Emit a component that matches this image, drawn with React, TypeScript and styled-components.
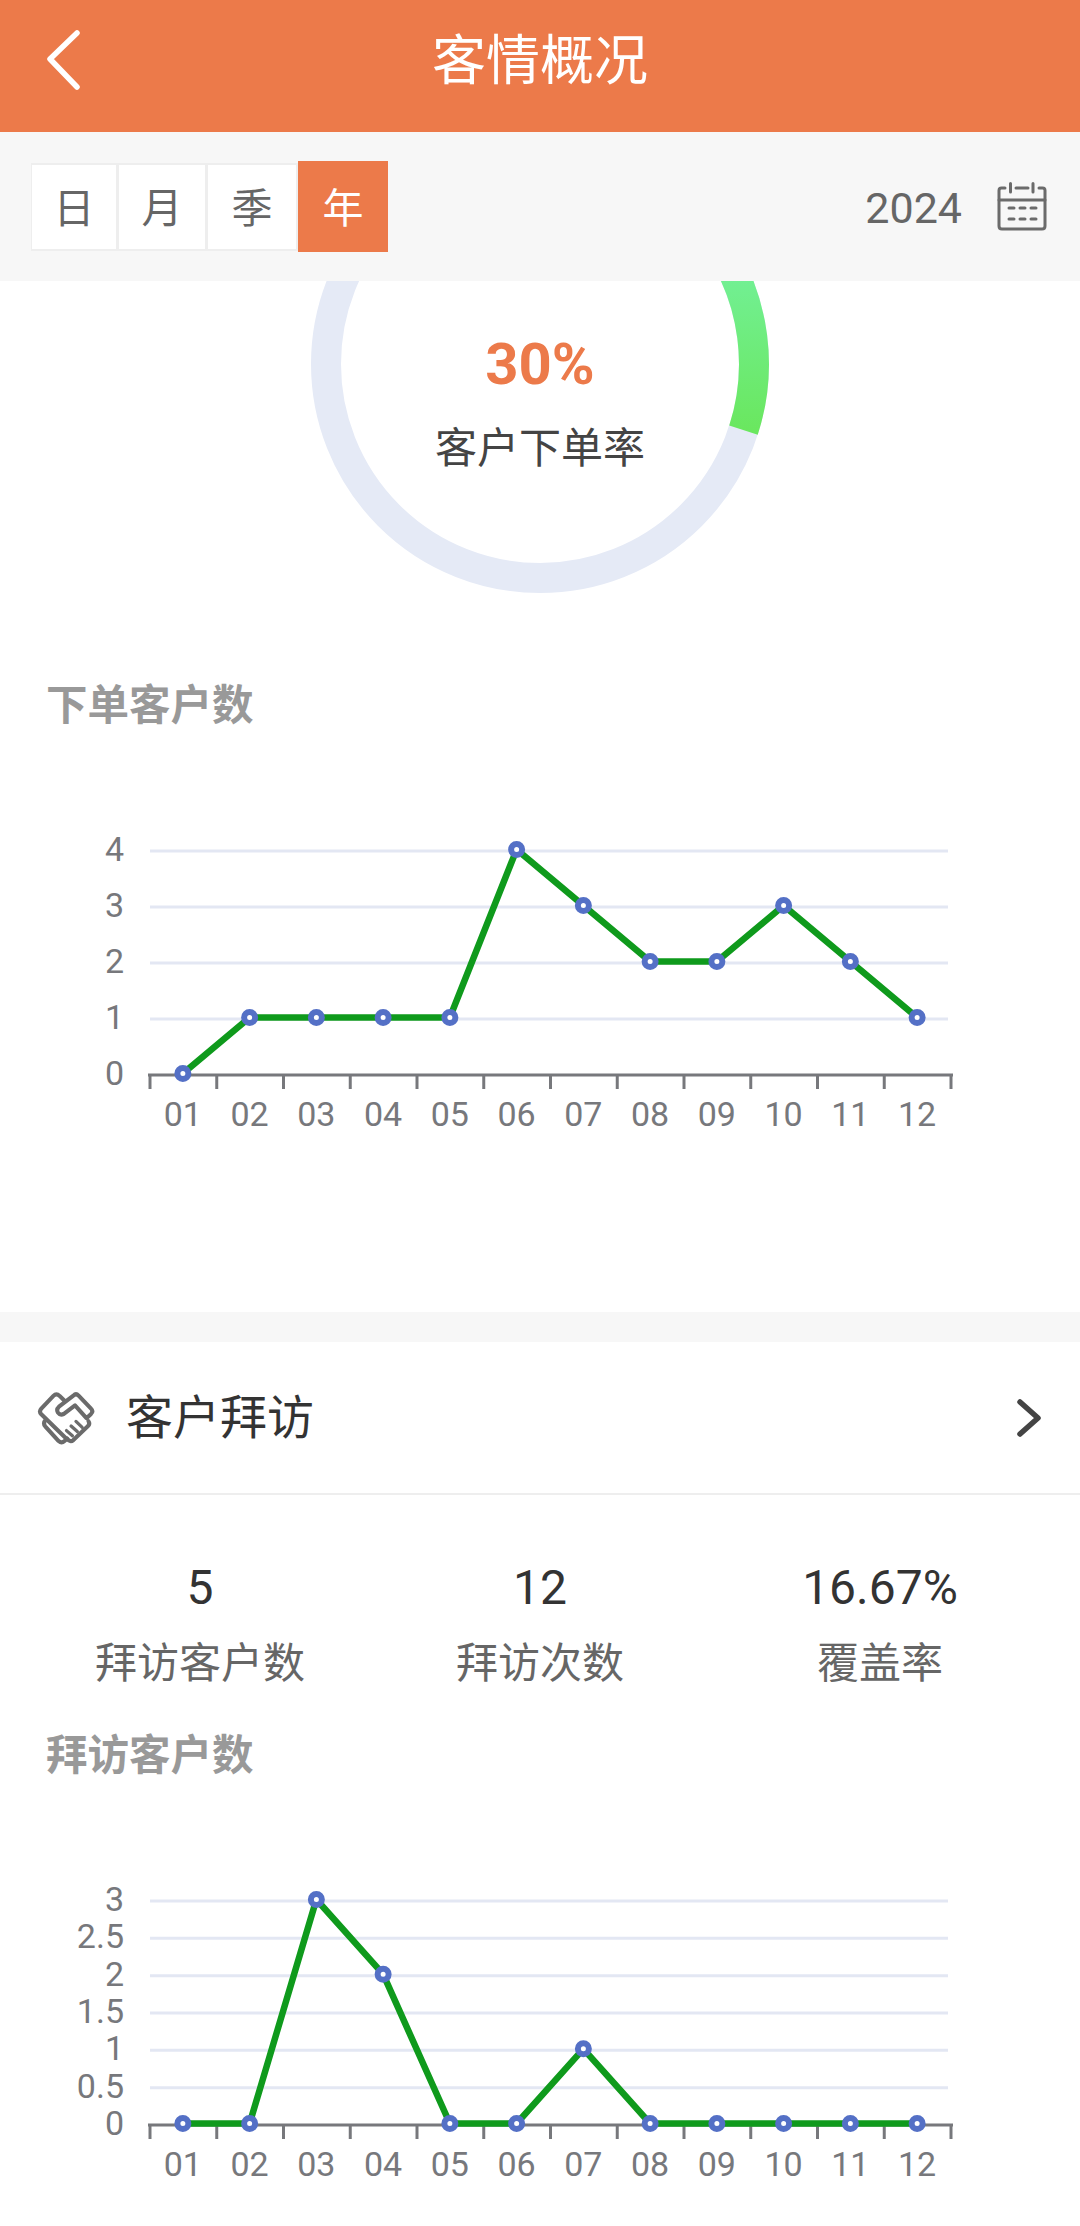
import styled, { createGlobalStyle } from 'styled-components'

const ORANGE = '#ec7a4a'
const GREY_ICON = '#6b6b6b'

const GlobalStyle = createGlobalStyle`
	html,
	body {
		margin: 0;
		padding: 0;
		background: #fff;
		font-family: Roboto, 'Noto Sans CJK SC', sans-serif;
	}
	* {
		box-sizing: border-box;
	}
`

const MONTHS = ['01', '02', '03', '04', '05', '06', '07', '08', '09', '10', '11', '12']
const ORDERS = [0, 1, 1, 1, 1, 4, 3, 2, 2, 3, 2, 1]
const VISITS = [0, 0, 3, 2, 0, 0, 1, 0, 0, 0, 0, 0]

const LineChart = ({
	data,
	ticks,
	height,
}: {
	data: number[]
	ticks: string[]
	height: number
}) => {
	const left = 150
	const right = 951
	const top = 115
	const bottom = 339
	const band = (right - left) / 12
	const max = Number(ticks[ticks.length - 1])
	const xAt = (i: number) => left + band * (i + 0.5) - 0.5
	const yAt = (v: number) => bottom - 1.5 - (v / max) * (bottom - top)
	const points = data.map((v, i) => `${xAt(i)},${yAt(v)}`).join(' ')

	return (
		<ChartSvg viewBox={`0 0 1080 ${height}`} height={height}>
			{ticks.map((t) => {
				const y = bottom - (Number(t) / max) * (bottom - top)
				return (
					<g key={t}>
						{Number(t) > 0 && <line x1={left} x2={right - 3} y1={y} y2={y} stroke="#e3e7f3" strokeWidth={3} />}
						<AxisText x={124} y={y - 2 + 12} textAnchor="end">
							{t}
						</AxisText>
					</g>
				)
			})}
			<line x1={left - 2} x2={right + 2} y1={bottom} y2={bottom} stroke="#77787c" strokeWidth={3} />
			{Array.from({ length: 13 }).map((_, i) => (
				<line
					key={i}
					x1={left + band * i}
					x2={left + band * i}
					y1={bottom}
					y2={bottom + 14}
					stroke="#77787c"
					strokeWidth={3}
				/>
			))}
			{MONTHS.map((m, i) => (
				<AxisText key={m} x={xAt(i)} y={bottom + 51} textAnchor="middle">
					{m}
				</AxisText>
			))}
			<polyline points={points} fill="none" stroke="#0f9a1c" strokeWidth={6.5} strokeLinejoin="round" />
			{data.map((v, i) => (
				<circle key={i} cx={xAt(i)} cy={yAt(v)} r={5.5} fill="#fff" stroke="#5470c6" strokeWidth={6} />
			))}
		</ChartSvg>
	)
}

const Gauge = () => (
	<GaugeBox>
		<GaugeSvg viewBox="0 0 1080 340" height={340}>
			<defs>
				<linearGradient id="ringGreen" gradientUnits="userSpaceOnUse" x1="0" y1="-10" x2="0" y2="150">
					<stop offset="0" stopColor="#72f095" />
					<stop offset="1" stopColor="#6ae75f" />
				</linearGradient>
			</defs>
			<circle cx={540} cy={83} r={214} fill="none" stroke="#e5eaf6" strokeWidth={30} />
			<path d="M540 -131 A214 214 0 0 1 743.5 149.1" fill="none" stroke="url(#ringGreen)" strokeWidth={30} />
		</GaugeSvg>
		<GaugeText>
			<Percent>30%</Percent>
			<GaugeLabel>客户下单率</GaugeLabel>
		</GaugeText>
	</GaugeBox>
)

const BackIcon = () => (
	<svg width="40" height="64" viewBox="0 0 40 64">
		<path d="M34 5 L7 31 L34 59" fill="none" stroke="#fff" strokeWidth="5.5" strokeLinecap="round" strokeLinejoin="round" />
	</svg>
)

const CalendarIcon = () => (
	<svg width="50" height="50" viewBox="0 0 50 50" fill="none" stroke={GREY_ICON} strokeWidth="3" strokeLinecap="round">
		<path d="M8 6 H4.5 Q2 6 2 8.5 V44 Q2 47 5 47 H45 Q48 47 48 44 V8.5 Q48 6 45.5 6 H42" />
		<path d="M19 6 H31 M13.5 1.5 V10 M36 1.5 V10" />
		<path d="M2 18 H48" />
		<path d="M12 26 H17 M23 26 H28 M34 26 H39 M12 37 H17 M23 37 H28 M34 37 H39" />
	</svg>
)

const HandshakeIcon = () => (
	<svg width="58" height="54" viewBox="50 30 175 165" fill="none" stroke={GREY_ICON} strokeWidth="12.5" strokeLinejoin="round" strokeLinecap="round">
		<path d="M133 60 L118 45 Q108 36 99 45 L62 84 Q54 93 62 101 L135 172" />
		<path d="M160 44 Q168 36 176 44 L214 84 Q222 92 214 100 L200 113 L165 74 L131 100 Q120 106 113 96 Q107 86 116 78 Z" />
		<path d="M76 118 Q66 128 74 138 L115 183 Q124 191 133 183 L141 176" />
		<path d="M206 122 Q212 130 204 138 L160 180 Q150 188 141 176" />
		<path d="M139 151 L157 167 M153 137 L172 154 M168 123 L187 141" strokeWidth="10" />
	</svg>
)

const ChevronIcon = () => (
	<svg width="24" height="38" viewBox="0 0 24 38">
		<path d="M3 3 L21 19 L3 35" fill="none" stroke="#444" strokeWidth="5.5" strokeLinecap="round" strokeLinejoin="round" />
	</svg>
)

export default function App() {
	return (
		<Page>
			<GlobalStyle />
			<Header>
				<Back>
					<BackIcon />
				</Back>
				<HeaderTitle>客情概况</HeaderTitle>
			</Header>
			<Toolbar>
				<Tabs>
					<Tab $w={87}>日</Tab>
					<Tab $w={89}>月</Tab>
					<Tab $w={91}>季</Tab>
					<Tab $w={90} $active>
						年
					</Tab>
				</Tabs>
				<YearPicker>
					<Year>2024</Year>
					<CalendarIcon />
				</YearPicker>
			</Toolbar>
			<Gauge />
			<ChartTitle>下单客户数</ChartTitle>
			<LineChart data={ORDERS} ticks={['0', '1', '2', '3', '4']} height={576} />
			<Gap />
			<VisitHeader>
				<HandshakeIcon />
				<VisitTitle>客户拜访</VisitTitle>
				<ChevronIcon />
			</VisitHeader>
			<Stats>
				<Stat>
					<StatValue>5</StatValue>
					<StatLabel>拜访客户数</StatLabel>
				</Stat>
				<Stat>
					<StatValue>12</StatValue>
					<StatLabel>拜访次数</StatLabel>
				</Stat>
				<Stat>
					<StatValue>16.67%</StatValue>
					<StatLabel>覆盖率</StatLabel>
				</Stat>
			</Stats>
			<ChartTitle $top={32}>拜访客户数</ChartTitle>
			<LineChart data={VISITS} ticks={['0', '0.5', '1', '1.5', '2', '2.5', '3']} height={441} />
		</Page>
	)
}

const Page = styled.div`
	width: 1080px;
	height: 2226px;
	overflow: hidden;
	background: #fff;
`
const Header = styled.header`
	height: 132px;
	background: ${ORANGE};
	display: grid;
	grid-template-columns: 1fr auto 1fr;
	align-items: center;
`
const Back = styled.div`
	display: flex;
	padding: 0 0 12px 43px;
`
const HeaderTitle = styled.h1`
	margin: 0 0 8px;
	font-size: 54px;
	font-weight: 400;
	line-height: 70px;
	color: #fff;
`
const Toolbar = styled.div`
	height: 149px;
	padding: 0 33px 0 31px;
	background: #f7f7f7;
	display: flex;
	align-items: center;
	justify-content: space-between;
`
const Tabs = styled.div`
	display: flex;
	align-items: center;
`
const Tab = styled.div<{ $w: number; $active?: boolean }>`
	width: ${(p) => p.$w}px;
	height: ${(p) => (p.$active ? 91 : 88)}px;
	padding-bottom: 3px;
	display: flex;
	align-items: center;
	justify-content: center;
	font-size: 41px;
	color: ${(p) => (p.$active ? '#fff' : '#666')};
	background: ${(p) => (p.$active ? ORANGE : '#fff')};
	border: ${(p) => (p.$active ? 'none' : '2px solid #eeeeee')};
	border-left-width: 1px;
`
const YearPicker = styled.div`
	display: flex;
	align-items: center;
	gap: 35px;
`
const Year = styled.span`
	font-size: 43px;
	line-height: 56px;
	padding-top: 2px;
	color: #666;
`
const GaugeBox = styled.div`
	position: relative;
	height: 340px;
`
const GaugeSvg = styled.svg`
	display: block;
	width: 100%;
`
const GaugeText = styled.div`
	position: absolute;
	top: 53px;
	left: 0;
	right: 0;
	display: flex;
	flex-direction: column;
	align-items: center;
	gap: 25px;
`
const Percent = styled.div`
	font-size: 58px;
	font-weight: 700;
	line-height: 60px;
	color: ${ORANGE};
`
const GaugeLabel = styled.div`
	font-size: 42px;
	line-height: 60px;
	color: #444;
`
const ChartTitle = styled.h3<{ $top?: number }>`
	margin: ${(p) => p.$top ?? 55}px 0 0 46px;
	font-size: 41.5px;
	font-weight: 700;
	line-height: 60px;
	color: #999;
`
const ChartSvg = styled.svg`
	display: block;
	width: 100%;
`
const AxisText = styled.text`
	font-family: Roboto, sans-serif;
	font-size: 34px;
	fill: #77787c;
`
const Gap = styled.div`
	height: 30px;
	background: #f7f7f7;
`
const VisitHeader = styled.div`
	height: 153px;
	padding: 0 39px 0 37px;
	display: flex;
	align-items: center;
	border-bottom: 2px solid #eeeeee;
`
const VisitTitle = styled.div`
	flex: 1;
	margin-left: 31px;
	font-size: 47px;
	line-height: 60px;
	color: #333;
`
const Stats = styled.div`
	padding: 63px 30px 0;
	display: grid;
	grid-template-columns: repeat(3, 1fr);
`
const Stat = styled.div`
	display: flex;
	flex-direction: column;
	align-items: center;
	gap: 16px;
`
const StatValue = styled.div`
	font-size: 48px;
	line-height: 60px;
	color: #333;
`
const StatLabel = styled.div`
	font-size: 42px;
	line-height: 60px;
	color: #666;
`
